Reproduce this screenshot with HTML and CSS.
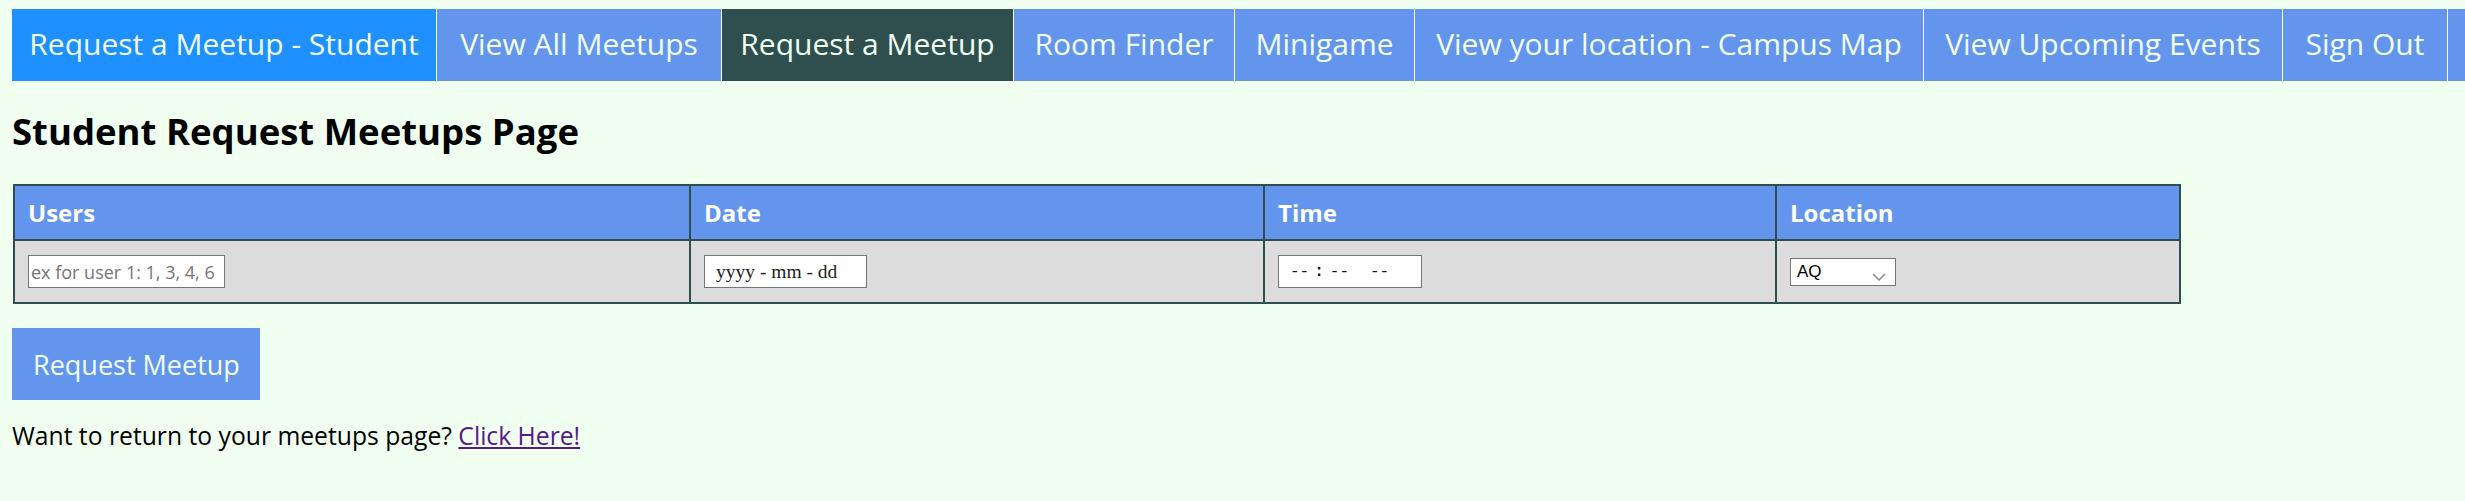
FILE: index.html
```html
<!DOCTYPE html>
<html lang="en">
<head>
<meta charset="utf-8">
<title>Student Request Meetups Page</title>
<link rel="stylesheet" href="styles.css">
</head>
<body>
<nav class="topnav">
  <ul class="nav-list">
    <li class="nav-item nav-item--brand nav-w-student"><a href="#">Request a Meetup - Student</a></li>
    <li class="nav-item nav-w-all"><a href="#">View All Meetups</a></li>
    <li class="nav-item nav-item--active nav-w-request"><a href="#">Request a Meetup</a></li>
    <li class="nav-item nav-w-rooms"><a href="#">Room Finder</a></li>
    <li class="nav-item nav-w-game"><a href="#">Minigame</a></li>
    <li class="nav-item nav-w-map"><a href="#">View your location - Campus Map</a></li>
    <li class="nav-item nav-w-events"><a href="#">View Upcoming Events</a></li>
    <li class="nav-item nav-w-signout"><a href="#">Sign Out</a></li>
  </ul>
</nav>
<main class="content">
  <h2 class="page-title">Student Request Meetups Page</h2>
  <table class="request-table">
    <colgroup>
      <col class="col-users">
      <col class="col-date">
      <col class="col-time">
      <col class="col-location">
    </colgroup>
    <thead>
      <tr class="head-row">
        <th>Users</th>
        <th>Date</th>
        <th>Time</th>
        <th>Location</th>
      </tr>
    </thead>
    <tbody>
      <tr class="body-row">
        <td><span class="field field--users">ex for user 1: 1, 3, 4, 6</span></td>
        <td><span class="field field--date">yyyy - mm - dd</span></td>
        <td><span class="field field--time"><span class="seg">--</span><span class="colon">:</span><span class="seg">--</span><span class="seg seg--ampm">--</span></span></td>
        <td><span class="field field--select"><span class="select-value">AQ</span><svg class="chevron" width="14" height="8" viewBox="0 0 14 8"><polyline points="1,1 7,7 13,1" fill="none" stroke="#8a8a8a" stroke-width="1.5"/></svg></span></td>
      </tr>
    </tbody>
  </table>
  <button class="submit-btn" type="button">Request Meetup</button>
  <p class="return-text">Want to return to your meetups page? <a class="return-link" href="#">Click Here!</a></p>
</main>
</body>
</html>
```
FILE: styles.css
```css
html, body {
  background: #f0fff0;
}

body {
  margin: 0;
  padding: 9px 0 0 12px;
  font-family: "Open Sans", "Noto Sans", sans-serif;
  color: #000;
  overflow: hidden;
}

.topnav {
  display: block;
}

.nav-list {
  display: flex;
  flex-wrap: nowrap;
  margin: 0;
  padding: 0;
  list-style: none;
  background: #6495ed;
  height: 72px;
}

.nav-item {
  flex: 0 0 auto;
  box-sizing: border-box;
  background: #6495ed;
  border-right: 1px solid #ffffff;
}

.nav-item--brand { background: #1e90ff; }
.nav-item--active { background: #2f4f4f; }

.nav-w-student { width: 425px; }
.nav-w-all { width: 285px; }
.nav-w-request { width: 292px; }
.nav-w-rooms { width: 221px; }
.nav-w-game { width: 180px; }
.nav-w-map { width: 509px; }
.nav-w-events { width: 359px; }
.nav-w-signout { width: 165px; }

.nav-item a {
  display: block;
  line-height: 70px;
  font-size: 30px;
  color: #f0fff0;
  text-align: center;
  text-decoration: none;
  white-space: nowrap;
}

.page-title {
  margin: 28px 0 31px;
  font-size: 36.5px;
  line-height: 44px;
  font-weight: 700;
}

.request-table {
  border-collapse: collapse;
  table-layout: fixed;
  width: 2166px;
  margin-left: 1px;
}

.col-users { width: 676px; }
.col-date { width: 574px; }
.col-time { width: 512px; }
.col-location { width: 404px; }

.request-table th,
.request-table td {
  border: 2px solid #2f4f4f;
  padding: 0 13px;
  text-align: left;
  vertical-align: middle;
}

.head-row { height: 55px; }
.body-row { height: 63px; }

.request-table th {
  background: #6495ed;
  color: #ffffff;
  font-size: 24px;
  font-weight: 700;
}

.request-table td {
  background: #dcdcdc;
}

.field {
  display: inline-flex;
  align-items: center;
  box-sizing: border-box;
  height: 33px;
  background: #ffffff;
  border: 1px solid #767676;
  vertical-align: middle;
  white-space: nowrap;
}

.field--users {
  width: 197px;
  padding: 0 2px;
  font-size: 18px;
  color: #757575;
}

.field--date {
  width: 163px;
  padding: 0 11px;
  font-family: "Liberation Serif", serif;
  font-size: 19.5px;
  color: #222;
}

.field--time {
  width: 144px;
  padding: 0 11px;
  font-family: "Liberation Mono", monospace;
  font-size: 16px;
  color: #111;
}

.colon {
  margin: 0 6px 0 5px;
  font-weight: 700;
}

.seg--ampm {
  margin-left: 21px;
}

.field--select {
  width: 106px;
  height: 28px;
  padding: 0 9px 0 6px;
  justify-content: space-between;
  font-family: "Liberation Sans", sans-serif;
  font-size: 17px;
  color: #000;
}

.chevron {
  margin-top: 10px;
}

.submit-btn {
  display: block;
  margin: 24px 0 0;
  width: 248px;
  height: 72px;
  padding: 0 0 0 21px;
  border: 0;
  background: #6495ed;
  color: #f0fff0;
  font-family: "Open Sans", "Noto Sans", sans-serif;
  font-size: 27px;
  text-align: left;
  white-space: nowrap;
}

.return-text {
  margin: 19px 0 0;
  font-size: 24.7px;
  line-height: 34px;
}

.return-link {
  color: #551a8b;
}
```
